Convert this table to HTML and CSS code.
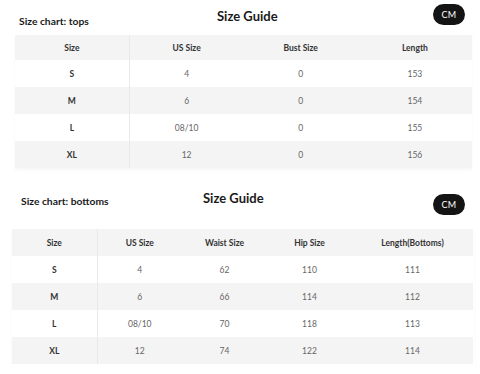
FILE: index.html
```html
<!DOCTYPE html>
<html>
<head>
<meta charset="utf-8">
<link rel="stylesheet" href="styles.css">
</head>
<body>
<section class="chart chart-tops">
  <div class="chart-head">
    <div class="chart-label">Size chart: tops</div>
    <div class="chart-title">Size Guide</div>
    <div class="unit-pill">CM</div>
  </div>
  <table class="size-table">
    <colgroup><col><col><col><col></colgroup>
    <thead>
      <tr><th>Size</th><th>US Size</th><th>Bust Size</th><th>Length</th></tr>
    </thead>
    <tbody>
      <tr><th>S</th><td>4</td><td>0</td><td>153</td></tr>
      <tr><th>M</th><td>6</td><td>0</td><td>154</td></tr>
      <tr><th>L</th><td>08/10</td><td>0</td><td>155</td></tr>
      <tr><th>XL</th><td>12</td><td>0</td><td>156</td></tr>
    </tbody>
  </table>
</section>
<section class="chart chart-bottoms">
  <div class="chart-head">
    <div class="chart-label">Size chart: bottoms</div>
    <div class="chart-title">Size Guide</div>
    <div class="unit-pill">CM</div>
  </div>
  <table class="size-table">
    <colgroup><col class="c-narrow"><col class="c-narrow"><col class="c-narrow"><col class="c-narrow"><col class="c-wide"></colgroup>
    <thead>
      <tr><th>Size</th><th>US Size</th><th>Waist Size</th><th>Hip Size</th><th>Length(Bottoms)</th></tr>
    </thead>
    <tbody>
      <tr><th>S</th><td>4</td><td>62</td><td>110</td><td>111</td></tr>
      <tr><th>M</th><td>6</td><td>66</td><td>114</td><td>112</td></tr>
      <tr><th>L</th><td>08/10</td><td>70</td><td>118</td><td>113</td></tr>
      <tr><th>XL</th><td>12</td><td>74</td><td>122</td><td>114</td></tr>
    </tbody>
  </table>
</section>
</body>
</html>
```
FILE: styles.css
```css
* { box-sizing: border-box; }
html, body { margin: 0; padding: 0; background: #fff; }
body {
  font-family: Lato, "Noto Sans", sans-serif;
  color: #222;
  width: 480px;
}

.chart-head {
  display: flex;
  align-items: flex-start;
}
.chart-label {
  font-size: 10.3px;
  line-height: 12px;
  font-weight: 700;
  color: #1a1a1a;
}
.chart-title {
  font-size: 13px;
  line-height: 15px;
  font-weight: 700;
  color: #1a1a1a;
}
.unit-pill {
  margin-left: auto;
  width: 32px;
  height: 21px;
  border-radius: 11px;
  background: #141414;
  color: #fff;
  font-size: 9px;
  line-height: 21px;
  text-align: center;
  font-weight: 400;
  letter-spacing: 0.2px;
}

/* tops */
.chart-tops .chart-head { height: 35px; padding: 4px 15px 0 19px; }
.chart-tops .chart-label { margin-top: 11px; width: 198px; }
.chart-tops .chart-title { margin-top: 5px; }
.chart-tops .size-table { margin-left: 15px; width: 457px; }
.chart-tops thead tr { height: 25px; }

/* bottoms */
.chart-bottoms .chart-head { height: 61px; padding: 26px 15px 0 21px; }
.chart-bottoms .chart-label { margin-top: 1px; width: 182px; }
.chart-bottoms .chart-title { margin-top: -3px; }
.chart-bottoms .size-table { margin-left: 12px; width: 461px; }
.chart-bottoms thead tr { height: 27px; }
.c-narrow { width: 85px; }
.c-wide { width: 121px; }

.size-table {
  border-collapse: collapse;
  table-layout: fixed;
  box-shadow: 0 2px 3px rgba(0,0,0,0.04);
}
.size-table th, .size-table td {
  padding: 0;
  text-align: center;
  vertical-align: middle;
  font-size: 8.5px;
}
.size-table thead th {
  font-weight: 700;
  color: #333;
  background: #f4f4f4;
}
.size-table tbody tr { height: 27px; }
.size-table tbody tr:nth-child(even) { background: #f4f4f4; }
.size-table tbody th {
  font-weight: 700;
  color: #333;
}
.size-table td {
  color: #666;
  font-weight: 400;
}
.size-table tr > :first-child { border-right: 1px solid #e9e9e9; }
```
